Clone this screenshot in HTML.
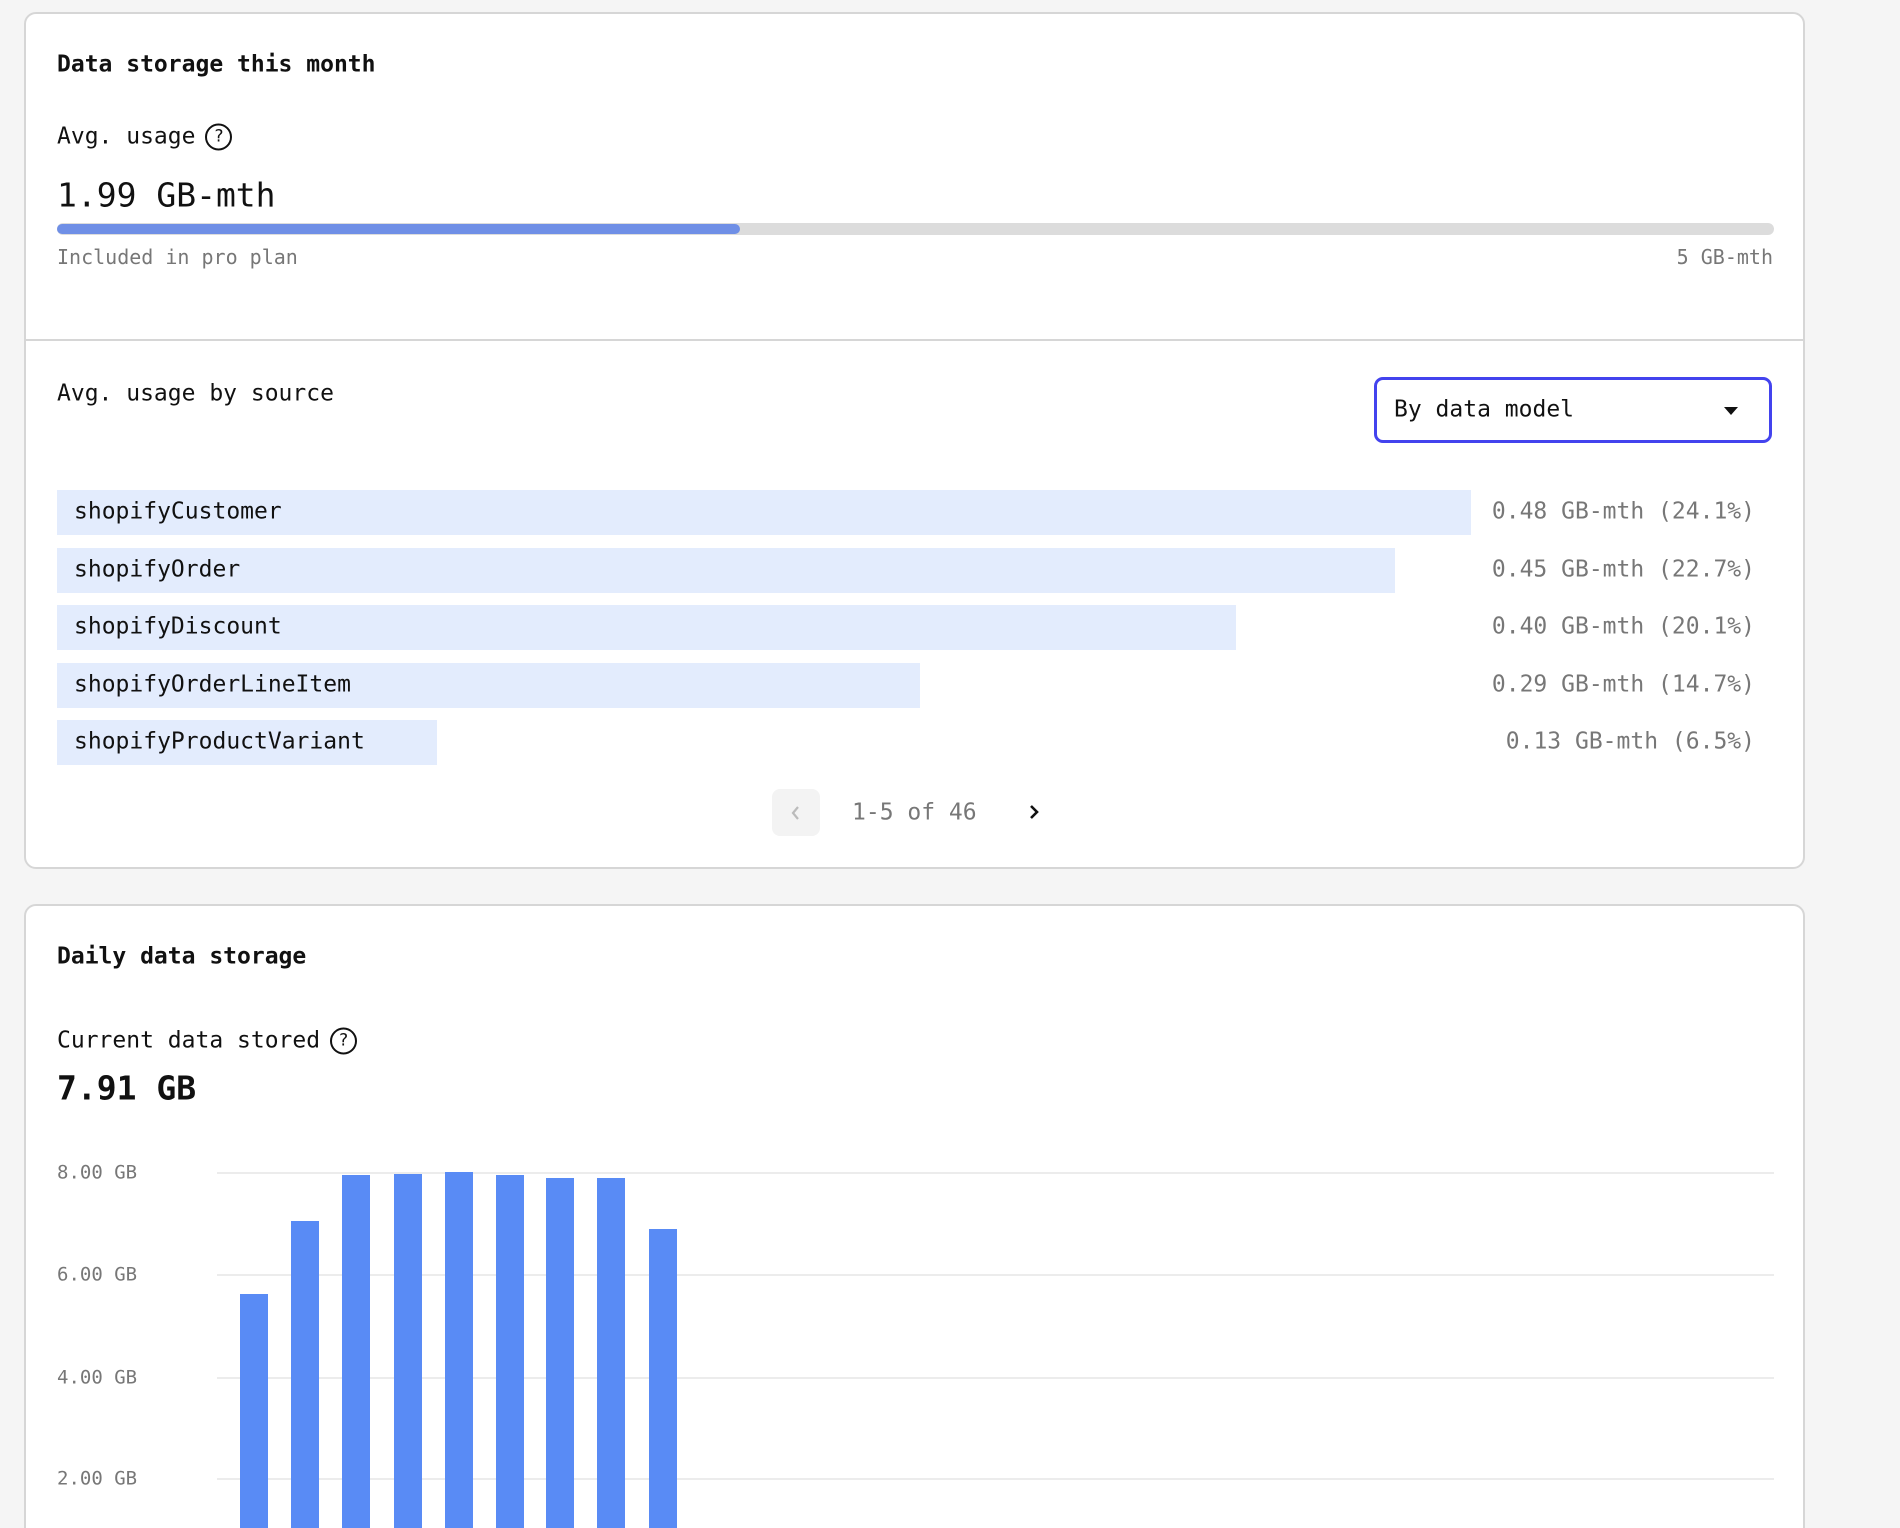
<!DOCTYPE html>
<html><head><meta charset="utf-8"><style>
*{box-sizing:border-box;margin:0;padding:0}
html,body{width:1900px;height:1528px;overflow:hidden}
body{background:#f5f5f5;font-family:"DejaVu Sans Mono","Liberation Mono",monospace;color:#111;position:relative}
#w{position:absolute;left:0;top:0;width:1900px;height:1528px;overflow:hidden}
.card{position:absolute;left:24px;width:1781px;background:#fff;border:2px solid #d6d6d6;border-radius:12px}
.t{position:absolute;white-space:nowrap;font-size:23px;line-height:1;transform:translateY(-50%)}
.b{font-weight:bold}
.g{color:#777}
.help{display:inline-block;width:27px;height:27px;border:2px solid #111;border-radius:50%;font-size:17px;text-align:center;line-height:23px;vertical-align:middle;margin-left:10px;font-family:"DejaVu Sans",sans-serif}
.bar{position:absolute;left:57px;height:45px;background:#e3ecfd}
.grid{position:absolute;left:217px;width:1557px;height:2px;background:#ececec}
.col{position:absolute;width:28px;background:#598bf5;bottom:0}
</style></head><body><div id="w">
<div class="card" style="top:12px;height:857px"></div>
<div class="card" style="top:904px;height:700px"></div>

<div class="t b" style="left:57px;top:65px">Data storage this month</div>
<div class="t" style="left:57px;top:137px">Avg. usage<span class="help">?</span></div>
<div class="t" style="left:57px;top:195px;font-size:33px">1.99 GB-mth</div>
<div style="position:absolute;left:57px;top:223px;width:1717px;height:12px;background:#dcdcdc;border-radius:6px"></div>
<div style="position:absolute;left:57px;top:224px;width:683px;height:10px;background:#6f8fe6;border-radius:5px"></div>
<div class="t g" style="left:57px;top:257px;font-size:20px">Included in pro plan</div>
<div class="t g" style="right:127px;top:257px;font-size:20px">5 GB-mth</div>
<div style="position:absolute;left:26px;top:339px;width:1777px;height:2px;background:#d6d6d6"></div>

<div class="t" style="left:57px;top:394px">Avg. usage by source</div>
<div style="position:absolute;left:1374px;top:377px;width:398px;height:66px;border:3px solid #4343ee;border-radius:9px"></div>
<div class="t" style="left:1394px;top:410px">By data model</div>
<div style="position:absolute;left:1724px;top:407px;width:0;height:0;border-left:7px solid transparent;border-right:7px solid transparent;border-top:8px solid #111"></div>

<div class="bar" style="top:490px;width:1414px"></div>
<div class="bar" style="top:548px;width:1338px"></div>
<div class="bar" style="top:605px;width:1179px"></div>
<div class="bar" style="top:663px;width:863px"></div>
<div class="bar" style="top:720px;width:380px"></div>
<div class="t" style="left:74px;top:512px">shopifyCustomer</div>
<div class="t" style="left:74px;top:570px">shopifyOrder</div>
<div class="t" style="left:74px;top:627px">shopifyDiscount</div>
<div class="t" style="left:74px;top:685px">shopifyOrderLineItem</div>
<div class="t" style="left:74px;top:742px">shopifyProductVariant</div>
<div class="t g" style="right:145px;top:512px">0.48 GB-mth (24.1%)</div>
<div class="t g" style="right:145px;top:570px">0.45 GB-mth (22.7%)</div>
<div class="t g" style="right:145px;top:627px">0.40 GB-mth (20.1%)</div>
<div class="t g" style="right:145px;top:685px">0.29 GB-mth (14.7%)</div>
<div class="t g" style="right:145px;top:742px">0.13 GB-mth (6.5%)</div>

<div style="position:absolute;left:772px;top:789px;width:48px;height:47px;background:#f3f3f3;border-radius:8px"></div>
<svg style="position:absolute;left:788px;top:804px" width="16" height="18"><path d="M10 3 L5 9 L10 15" stroke="#bbb" stroke-width="2.2" fill="none"/></svg>
<div class="t g" style="left:852px;top:813px">1-5 of 46</div>
<svg style="position:absolute;left:1026px;top:803px" width="16" height="18"><path d="M5 3 L11 9 L5 15" stroke="#111" stroke-width="2.6" fill="none"/></svg>

<div class="t b" style="left:57px;top:957px">Daily data storage</div>
<div class="t" style="left:57px;top:1041px">Current data stored<span class="help">?</span></div>
<div class="t b" style="left:57px;top:1088px;font-size:33px">7.91 GB</div>

<div class="grid" style="top:1172px"></div>
<div class="grid" style="top:1274px"></div>
<div class="grid" style="top:1377px"></div>
<div class="grid" style="top:1478px"></div>
<div class="t g" style="left:57px;top:1173px;font-size:19px">8.00 GB</div>
<div class="t g" style="left:57px;top:1275px;font-size:19px">6.00 GB</div>
<div class="t g" style="left:57px;top:1378px;font-size:19px">4.00 GB</div>
<div class="t g" style="left:57px;top:1479px;font-size:19px">2.00 GB</div>
<div class="col" style="left:240px;top:1294px;height:234px"></div>
<div class="col" style="left:291px;top:1221px;height:307px"></div>
<div class="col" style="left:342px;top:1175px;height:353px"></div>
<div class="col" style="left:394px;top:1174px;height:354px"></div>
<div class="col" style="left:445px;top:1172px;height:356px"></div>
<div class="col" style="left:496px;top:1175px;height:353px"></div>
<div class="col" style="left:546px;top:1178px;height:350px"></div>
<div class="col" style="left:597px;top:1178px;height:350px"></div>
<div class="col" style="left:649px;top:1229px;height:299px"></div>
</div></body></html>
